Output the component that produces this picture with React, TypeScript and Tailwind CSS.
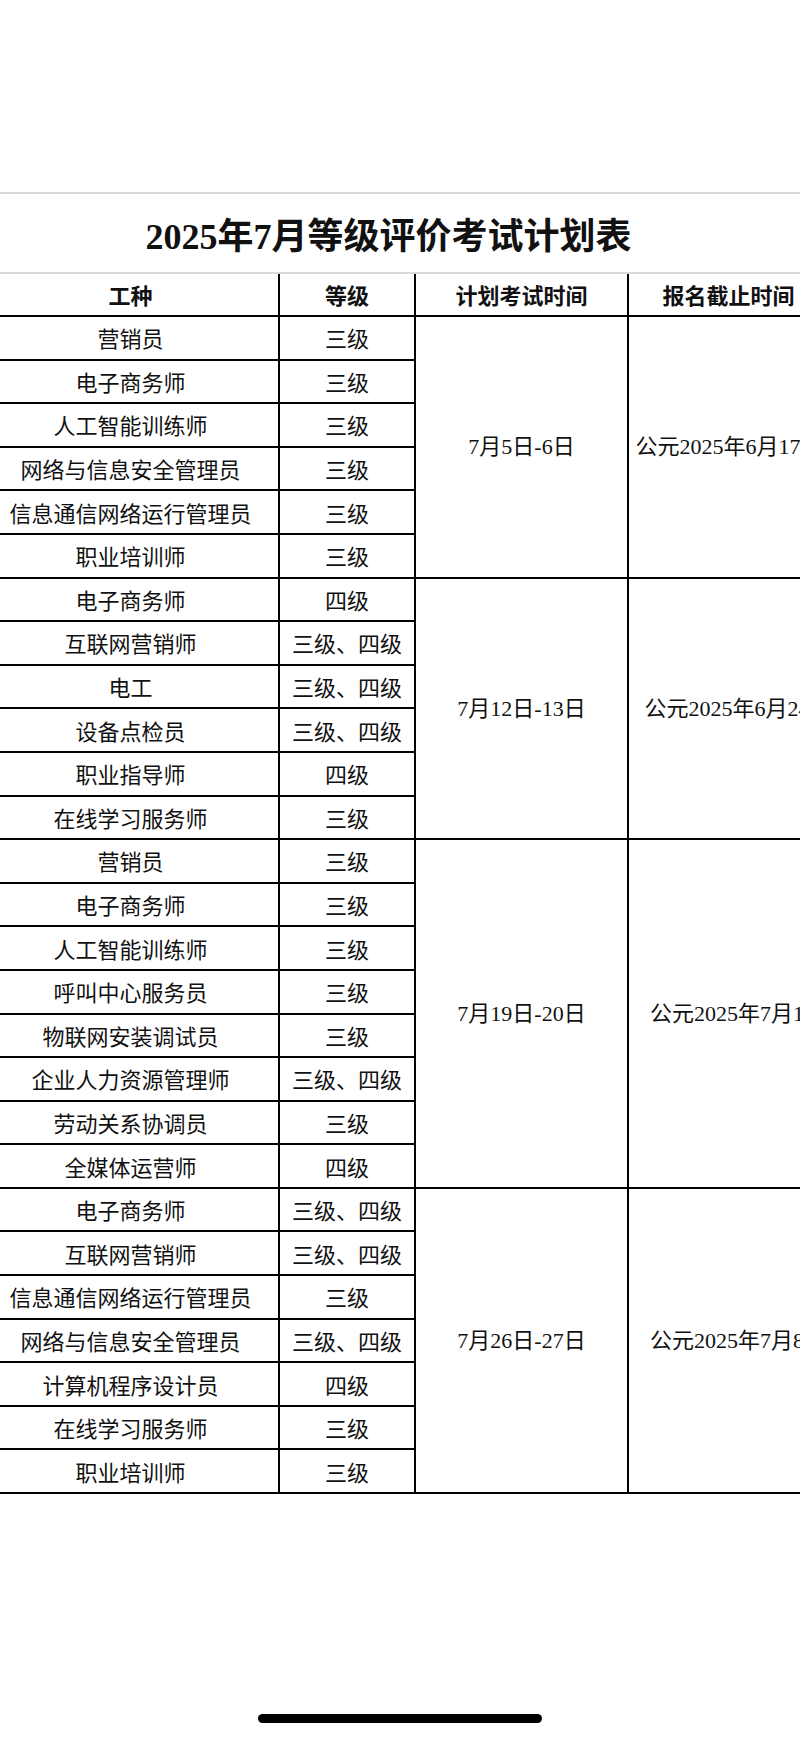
import React from 'react';

interface Group {
  date: string;
  deadline: string;
  span: string;
  pad: string;
  rows: [string, string][];
}

const groups: Group[] = [
  {
    date: '7月5日-6日',
    deadline: '公元2025年6月17日',
    span: 'row-span-6',
    pad: 'pl-[3px]',
    rows: [
      ['营销员', '三级'],
      ['电子商务师', '三级'],
      ['人工智能训练师', '三级'],
      ['网络与信息安全管理员', '三级'],
      ['信息通信网络运行管理员', '三级'],
      ['职业培训师', '三级'],
    ],
  },
  {
    date: '7月12日-13日',
    deadline: '公元2025年6月24日',
    span: 'row-span-6',
    pad: 'pl-[21px]',
    rows: [
      ['电子商务师', '四级'],
      ['互联网营销师', '三级、四级'],
      ['电工', '三级、四级'],
      ['设备点检员', '三级、四级'],
      ['职业指导师', '四级'],
      ['在线学习服务师', '三级'],
    ],
  },
  {
    date: '7月19日-20日',
    deadline: '公元2025年7月1日',
    span: 'row-span-8',
    pad: 'pl-[21px]',
    rows: [
      ['营销员', '三级'],
      ['电子商务师', '三级'],
      ['人工智能训练师', '三级'],
      ['呼叫中心服务员', '三级'],
      ['物联网安装调试员', '三级'],
      ['企业人力资源管理师', '三级、四级'],
      ['劳动关系协调员', '三级'],
      ['全媒体运营师', '四级'],
    ],
  },
  {
    date: '7月26日-27日',
    deadline: '公元2025年7月8日',
    span: 'row-span-7',
    pad: 'pl-[21px]',
    rows: [
      ['电子商务师', '三级、四级'],
      ['互联网营销师', '三级、四级'],
      ['信息通信网络运行管理员', '三级'],
      ['网络与信息安全管理员', '三级、四级'],
      ['计算机程序设计员', '四级'],
      ['在线学习服务师', '三级'],
      ['职业培训师', '三级'],
    ],
  },
];

const sans = "font-['Noto_Sans_CJK_SC','Noto_Sans',sans-serif]";
const serif = "font-['Liberation_Serif','Noto_Sans_CJK_SC',serif]";

export default function App() {
  return (
    <div className="relative w-[800px] h-[1738px] overflow-hidden bg-white text-[#111]">
      <div className="pt-[192px]">
        <div className="ml-[-17px] w-[843px]">
          {/* 标题 */}
          <div className="h-[82px] border-y-2 border-[#d9d9d9] flex items-center justify-center pr-[32px] pt-[3px]">
            <h1 className={`${serif} text-[36px] font-bold leading-none`}>
              2025<span className={sans}>年</span>7<span className={sans}>月等级评价考试计划表</span>
            </h1>
          </div>

          {/* 表格 */}
          <div className="grid grid-cols-[295px_134px_211px_197px] grid-rows-[41px_repeat(27,41.6px)] gap-[2px] pb-[2px] bg-black">
            <div className={`${sans} bg-white flex items-center justify-center text-[22px] font-bold`}>工种</div>
            <div className={`${sans} bg-white flex items-center justify-center text-[22px] font-bold`}>等级</div>
            <div className={`${sans} bg-white flex items-center justify-center text-[22px] font-bold`}>计划考试时间</div>
            <div className={`${sans} bg-white flex items-center justify-center text-[22px] font-bold pl-[2px]`}>报名截止时间</div>

            {groups.map((g) =>
              g.rows.map(([name, level], i) => (
                <React.Fragment key={g.date + i}>
                  <div className={`${sans} bg-white flex items-center justify-center text-[22px]`}>{name}</div>
                  <div className={`${sans} bg-white flex items-center justify-center text-[22px]`}>{level}</div>
                  {i === 0 && (
                    <>
                      <div className={`${serif} ${g.span} bg-white flex items-center justify-center text-[22px]`}>
                        {g.date}
                      </div>
                      <div className={`${serif} ${g.span} ${g.pad} bg-white flex items-center justify-center text-[22px] whitespace-nowrap`}>
                        {g.deadline}
                      </div>
                    </>
                  )}
                </React.Fragment>
              ))
            )}
          </div>
        </div>
      </div>

      {/* Home indicator */}
      <div className="absolute left-[258px] top-[1714px] w-[284px] h-[9px] rounded-full bg-black" />
    </div>
  );
}
